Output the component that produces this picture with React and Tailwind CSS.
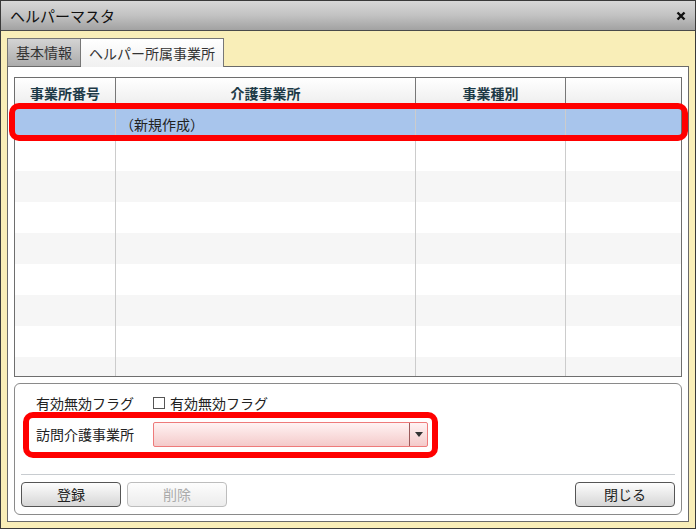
import React from "react";

const font = { fontFamily: '"Noto Sans CJK JP", "Noto Sans", sans-serif' };

const rows = ["sel", "w", "g", "w", "g", "w", "g", "w", "g"];

export default function App() {
  return (
    <div
      className="relative w-[696px] h-[529px] border border-[#3a3a3a] bg-[#f9eeb8] flex flex-col overflow-hidden"
      style={font}
    >
      {/* title bar */}
      <div className="h-[30px] shrink-0 flex items-center justify-between pl-[9px] pr-[9px] bg-gradient-to-b from-[#d8d8d8] via-[#c2c2c2] to-[#a2a2a2] border-b border-[#4a4a4a]">
        <span className="text-[15px] text-[#111] leading-none">ヘルパーマスタ</span>
        <svg width="10" height="10" viewBox="0 0 10 10" className="mt-[1px]">
          <path d="M1.5 1.5 L8.5 8.5 M8.5 1.5 L1.5 8.5" stroke="#111" strokeWidth="2.4" />
        </svg>
      </div>

      {/* body */}
      <div className="flex-1 flex flex-col pt-[7px] pl-[6px] pr-[6px] pb-[6px]">
        {/* tabs */}
        <div className="flex h-[28px] shrink-0 relative z-10">
          <div className="w-[74px] h-[28px] flex items-center justify-center border border-b-0 border-[#777] bg-gradient-to-b from-[#d4d4d4] to-[#ababab] text-[14px] text-[#333]">
            基本情報
          </div>
          <div className="w-[143px] h-[29px] flex items-center justify-center border border-b-0 border-l-0 border-[#777] bg-gradient-to-b from-[#ffffff] to-[#f0f0f0] text-[14px] text-[#333]">
            ヘルパー所属事業所
          </div>
        </div>

        {/* panel */}
        <div className="flex-1 bg-white border border-[#6a6a6a] px-[6px] pt-[10px] pb-[6px] flex flex-col gap-[6px]">
          {/* table */}
          <div className="h-[300px] shrink-0 border border-[#6e6e6e] overflow-hidden">
            <div className="grid grid-cols-[100px_300px_150px_1fr] h-[31px] bg-gradient-to-b from-[#ffffff] to-[#ececec] border-b border-[#d0d0d0]">
              {["事業所番号", "介護事業所", "事業種別", ""].map((h, i) => (
                <div
                  key={i}
                  className={
                    "flex items-center justify-center text-[14px] font-bold text-[#1d3a47] " +
                    (i > 0 ? "border-l border-[#777]" : "")
                  }
                >
                  {h}
                </div>
              ))}
            </div>
            {rows.map((r, ri) => (
              <div
                key={ri}
                className={
                  "grid grid-cols-[100px_300px_150px_1fr] h-[31px] " +
                  (r === "sel" ? "bg-[#a8c5ec]" : r === "g" ? "bg-[#f6f6f6]" : "bg-white")
                }
              >
                {[0, 1, 2, 3].map((c) => (
                  <div
                    key={c}
                    className={
                      "flex items-center text-[14px] text-[#222] " +
                      (c > 0 ? "border-l border-[#cccccc] " : "") +
                      (c === 1 ? "pl-[4px]" : "")
                    }
                  >
                    {r === "sel" && c === 1 ? "（新規作成）" : ""}
                  </div>
                ))}
              </div>
            ))}
          </div>

          {/* lower form */}
          <div className="flex-1 border border-[#8a8a8a] rounded-[6px] px-[6px] pt-[10px] pb-[6px] flex flex-col">
            <div className="h-[18px] flex items-center pl-[15px]">
              <span className="w-[117px] text-[14px] text-[#222]">有効無効フラグ</span>
              <span className="w-[12px] h-[12px] border border-[#555] bg-white"></span>
              <span className="ml-[5px] text-[14px] text-[#222]">有効無効フラグ</span>
            </div>
            <div className="mt-[10px] h-[25px] flex items-center pl-[15px]">
              <span className="w-[117px] text-[14px] text-[#222]">訪問介護事業所</span>
              <div className="w-[275px] h-[25px] flex border border-[#ee7a7a] rounded-[2px] bg-gradient-to-b from-[#fff3f3] to-[#f4caca]">
                <div className="flex-1"></div>
                <div className="w-[18px] border-l border-[#9a5a5a] flex items-center justify-center">
                  <svg width="8" height="5" viewBox="0 0 8 5">
                    <path d="M0 0 L8 0 L4 5 Z" fill="#333" />
                  </svg>
                </div>
              </div>
            </div>
            <div className="mt-[27px] h-px bg-[#c8ccd0]"></div>
            <div className="mt-[7px] flex justify-between">
              <div className="flex gap-[6px]">
                <button className="w-[100px] h-[25px] rounded-[4px] border border-[#555] bg-gradient-to-b from-[#fdfdfd] to-[#d6d6d6] text-[14px] text-[#222]">
                  登録
                </button>
                <button className="w-[100px] h-[25px] rounded-[4px] border border-[#bdbdbd] bg-gradient-to-b from-[#fdfdfd] to-[#ececec] text-[14px] text-[#ababab]">
                  削除
                </button>
              </div>
              <button className="w-[100px] h-[25px] rounded-[4px] border border-[#555] bg-gradient-to-b from-[#fdfdfd] to-[#d6d6d6] text-[14px] text-[#222]">
                閉じる
              </button>
            </div>
          </div>
        </div>
      </div>

      {/* red annotation rings */}
      <div className="absolute left-[8px] top-[102px] w-[679px] h-[38px] border-[6px] border-[#ff0000] rounded-[10px] pointer-events-none"></div>
      <div className="absolute left-[22px] top-[411px] w-[415px] h-[46px] border-[6px] border-[#ff0000] rounded-[10px] pointer-events-none"></div>
    </div>
  );
}
